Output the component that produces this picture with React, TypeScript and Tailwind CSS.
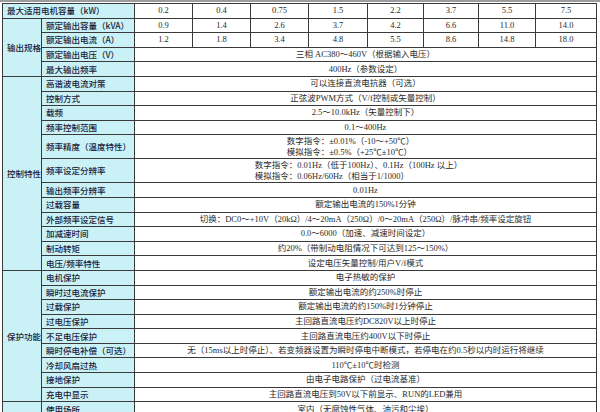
import React from "react";

const LBL = "bg-[#c9f1f6] border border-[#3a3a3a] text-[#1c1c3a] font-['Noto_Sans_CJK_SC',sans-serif] font-medium text-[8.5px] leading-[11px] px-[4px] whitespace-nowrap overflow-hidden p-0";
const VAL = "bg-white border border-[#3a3a3a] text-[#2a2a2a] font-['Liberation_Serif','Noto_Sans_CJK_SC',serif] text-[8.5px] leading-[11px] text-center whitespace-nowrap overflow-hidden p-0";

type Row = { label: string; value?: string | string[]; lines?: string[]; pr?: string; nums?: string[] };

const nums1 = ["0.2", "0.4", "0.75", "1.5", "2.2", "3.7", "5.5", "7.5"];
const nums2 = ["0.9", "1.4", "2.6", "3.7", "4.2", "6.6", "11.0", "14.0"];
const nums3 = ["1.2", "1.8", "3.4", "4.8", "5.5", "8.6", "14.8", "18.0"];

const out: Row[] = [
  { label: "额定输出容量（kVA）", nums: nums2 },
  { label: "额定输出电流（A）", nums: nums3 },
  { label: "额定输出电压（V）", value: "三相  AC380～460V（根据输入电压）" },
  { label: "最大输出频率", value: "400Hz（参数设定）" },
];

const ctrl: Row[] = [
  { label: "高谐波电流对策", value: "可以连接直流电抗器（可选）" },
  { label: "控制方式", value: "正弦波PWM方式（V/f控制或矢量控制）" },
  { label: "载频", value: "2.5～10.0kHz（矢量控制下）" },
  { label: "频率控制范围", value: "0.1～400Hz" },
  { label: "频率精度（温度特性）", lines: ["数字指令：±0.01%（-10～+50℃）", "模拟指令：±0.5%（+25℃±10℃）"], pr: "pr-[30px]" },
  { label: "频率设定分辨率", lines: ["数字指令：0.01Hz（低于100Hz）、0.1Hz（100Hz 以上）", "模拟指令：0.06Hz/60Hz（相当于1/1000）"], pr: "pr-[14px]" },
  { label: "输出频率分辨率", value: "0.01Hz" },
  { label: "过载容量", value: "额定输出电流的150%1分钟" },
  { label: "外部频率设定信号", value: "切换：DC0～+10V（20kΩ）/4～20mA（250Ω）/0～20mA（250Ω）/脉冲串/频率设定旋钮" },
  { label: "加减速时间", value: "0.0～6000（加速、减速时间设定）" },
  { label: "制动转矩", value: "约20%（带制动电阻情况下可达到125～150%）" },
  { label: "电压/频率特性", value: "设定电压矢量控制/用户V/f模式" },
];

const prot: Row[] = [
  { label: "电机保护", value: "电子热敏的保护" },
  { label: "瞬时过电流保护", value: "额定输出电流的约250%时停止" },
  { label: "过载保护", value: "额定输出电流的约150%时1分钟停止" },
  { label: "过电压保护", value: "主回路直流电压约DC820V以上时停止" },
  { label: "不足电压保护", value: "主回路直流电压约400V以下时停止" },
  { label: "瞬时停电补偿（可选）", value: "无（15ms以上时停止）、若变频器设置为瞬时停电中断模式，若停电在约0.5秒以内时运行将继续" },
  { label: "冷却风扇过热", value: "110℃±10℃时检测" },
  { label: "接地保护", value: "由电子电路保护（过电流基准）" },
  { label: "充电中显示", value: "主回路直流电压到50V以下前显示、RUN的LED兼用" },
];

function ValueCells({ r }: { r: Row }) {
  if (r.nums) {
    return (
      <>
        {r.nums.map((n, i) => (
          <td key={i} className={VAL}>{n}</td>
        ))}
      </>
    );
  }
  if (r.lines) {
    return (
      <td colSpan={8} className={VAL}>
        <div className={`flex justify-center ${r.pr ?? ""}`}>
          <div className="text-left">
            {r.lines.map((l, i) => (
              <div key={i}>{l}</div>
            ))}
          </div>
        </div>
      </td>
    );
  }
  return <td colSpan={8} className={VAL}>{r.value}</td>;
}

function Group({ title, rows }: { title: string; rows: Row[] }) {
  return (
    <>
      {rows.map((r, i) => (
        <tr key={i} className={r.lines ? "h-[24px]" : "h-[14.6px]"}>
          {i === 0 && (
            <td rowSpan={rows.length} className={`${LBL} text-center`}>{title}</td>
          )}
          <td className={LBL}>{r.label}</td>
          <ValueCells r={r} />
        </tr>
      ))}
    </>
  );
}

export default function App() {
  const widths = [39, 93, 58, 58, 58, 59, 56, 55, 57, 61];
  return (
    <div className="w-[600px] h-[412px] overflow-hidden bg-white">
      <div className="h-[2px] bg-[#9c9c9c]" />
      <div className="h-[1px]" />
      <div className="pl-[2px]">
        <table className="table-fixed border-collapse w-[594px]">
          <colgroup>
            {widths.map((w, i) => (
              <col key={i} style={{ width: w }} />
            ))}
          </colgroup>
          <tbody>
            <tr className="h-[14.6px]">
              <td colSpan={2} className={LBL}>最大适用电机容量（kW）</td>
              {nums1.map((n, i) => (
                <td key={i} className={VAL}>{n}</td>
              ))}
            </tr>
            <Group title="输出规格" rows={out} />
            <Group title="控制特性" rows={ctrl} />
            <Group title="保护功能" rows={prot} />
            <tr className="h-[14.6px]">
              <td className={`${LBL} text-center`}></td>
              <td className={LBL}>使用场所</td>
              <td colSpan={8} className={VAL}>室内（无腐蚀性气体、油污和尘埃）</td>
            </tr>
          </tbody>
        </table>
      </div>
    </div>
  );
}
